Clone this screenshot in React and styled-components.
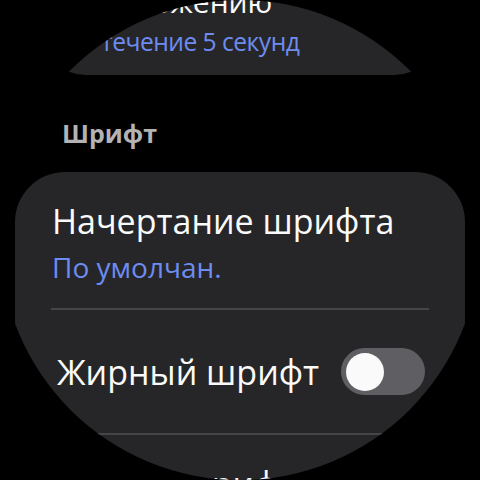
import React, { useState } from 'react';
import styled, { createGlobalStyle } from 'styled-components';

const GlobalSty = createGlobalStyle`
  html, body {
    margin: 0;
    padding: 0;
    background: #000;
  }
  body {
    font-family: "Open Sans", "Noto Sans", sans-serif;
  }
`;

const Screen = styled.div`
  width: 480px;
  height: 480px;
  border-radius: 50%;
  overflow: hidden;
  background: #000;
`;

const List = styled.div`
  display: flex;
  flex-direction: column;
  margin-top: ${(p) => p.offset}px;
  padding: 0 15px;
`;

const Card = styled.div`
  background: #262628;
  border-radius: 50px;
  display: flex;
  flex-direction: column;
  transform: scale(${(p) => p.scale || 1});
  transform-origin: center bottom;
`;

const Item = styled.div`
  padding: ${(p) => p.pad || '30px 37px 25px'};
  display: flex;
  flex-direction: column;
`;

const Title = styled.div`
  color: #fafafa;
  font-size: 34px;
  line-height: 38px;
  white-space: nowrap;
`;

const Sub = styled.div`
  color: #6d8cf0;
  font-size: 28px;
  line-height: 32px;
  margin-top: 11px;
  white-space: nowrap;
  letter-spacing: ${(p) => p.tight ? '-0.6px' : 'normal'};
`;

const Header = styled.div`
  color: #b3b3b3;
  font-size: 25px;
  font-weight: 700;
  line-height: 30px;
  padding: 43px 47px 24px;
`;

const Divider = styled.div`
  height: 2px;
  background: #454547;
  margin: 0 36px;
`;

const SwitchRow = styled.div`
  height: 123px;
  display: flex;
  align-items: center;
  justify-content: space-between;
  padding: 0 40px 0 42px;
`;

const RowLabel = styled.div`
  color: #fafafa;
  font-size: 34px;
  line-height: 38px;
  white-space: nowrap;
`;

const Track = styled.button`
  width: 84px;
  height: 47px;
  border: none;
  border-radius: 24px;
  background: ${(p) => (p.on ? '#6d8cf0' : '#5f5f63')};
  padding: 0 5px;
  display: flex;
  align-items: center;
  justify-content: ${(p) => (p.on ? 'flex-end' : 'flex-start')};
  cursor: pointer;
`;

const Knob = styled.span`
  width: 38px;
  height: 38px;
  border-radius: 50%;
  background: #fafafa;
`;

export default function App() {
  const [bold, setBold] = useState(false);

  return (
    <Screen>
      <GlobalSty />
      <List offset={-96}>
        <Card scale={0.88}>
          <Item pad="30px 37px 22px 43px">
            <Title>
              Возврат к последнему
              <br />
              приложению
            </Title>
            <Sub tight>В течение 5 секунд</Sub>
          </Item>
        </Card>

        <Header>Шрифт</Header>

        <Card>
          <Item>
            <Title>Начертание шрифта</Title>
            <Sub>По умолчан.</Sub>
          </Item>
          <Divider />
          <SwitchRow>
            <RowLabel>Жирный шрифт</RowLabel>
            <Track on={bold} onClick={() => setBold(!bold)}>
              <Knob />
            </Track>
          </SwitchRow>
          <Divider />
          <Item>
            <Title>Размер шрифта</Title>
          </Item>
        </Card>
      </List>
    </Screen>
  );
}
